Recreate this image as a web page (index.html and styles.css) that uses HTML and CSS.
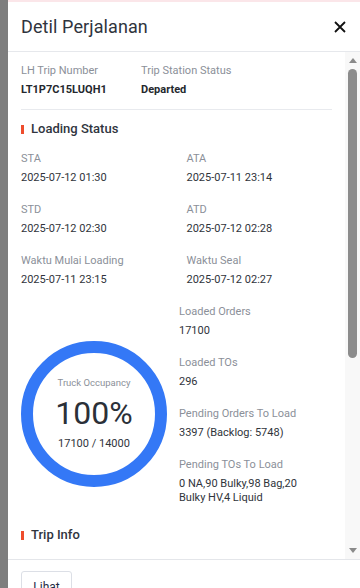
FILE: index.html
```html
<!DOCTYPE html>
<html lang="id">
<head>
<meta charset="utf-8">
<title>Detil Perjalanan</title>
<link rel="stylesheet" href="styles.css">
</head>
<body>
<div class="page">
  <div class="shade"></div>
  <aside class="drawer">
    <header class="drawer-header">
      <h1 class="drawer-title">Detil Perjalanan</h1>
      <button class="close-btn" aria-label="Tutup">
        <svg width="12" height="12" viewBox="0 0 12 12"><path d="M1 1L11 11M11 1L1 11" stroke="#111" stroke-width="1.8" fill="none"/></svg>
      </button>
    </header>
    <div class="drawer-body">
      <div class="scroll-content">
        <div class="trip-row">
          <div class="field">
            <div class="label">LH Trip Number</div>
            <div class="value bold">LT1P7C15LUQH1</div>
          </div>
          <div class="field">
            <div class="label">Trip Station Status</div>
            <div class="value bold">Departed</div>
          </div>
        </div>
        <div class="divider"></div>
        <h2 class="section-title"><span class="bar"></span>Loading Status</h2>
        <div class="grid">
          <div class="field item"><div class="label">STA</div><div class="value">2025-07-12 01:30</div></div>
          <div class="field item"><div class="label">ATA</div><div class="value">2025-07-11 23:14</div></div>
          <div class="field item"><div class="label">STD</div><div class="value">2025-07-12 02:30</div></div>
          <div class="field item"><div class="label">ATD</div><div class="value">2025-07-12 02:28</div></div>
          <div class="field item"><div class="label">Waktu Mulai Loading</div><div class="value">2025-07-11 23:15</div></div>
          <div class="field item"><div class="label">Waktu Seal</div><div class="value">2025-07-12 02:27</div></div>
        </div>
        <div class="occupancy">
          <div class="ring">
            <div class="ring-label">Truck Occupancy</div>
            <div class="ring-pct">100%</div>
            <div class="ring-sub">17100 / 14000</div>
          </div>
          <div class="occ-list">
            <div class="field item"><div class="label">Loaded Orders</div><div class="value">17100</div></div>
            <div class="field item"><div class="label">Loaded TOs</div><div class="value">296</div></div>
            <div class="field item"><div class="label">Pending Orders To Load</div><div class="value">3397 (Backlog: 5748)</div></div>
            <div class="field item"><div class="label">Pending TOs To Load</div><div class="value">0 NA,90 Bulky,98 Bag,20 Bulky HV,4 Liquid</div></div>
          </div>
        </div>
        <h2 class="section-title"><span class="bar"></span>Trip Info</h2>
      </div>
      <div class="scrollbar">
        <div class="arrow-up"></div>
        <div class="thumb"></div>
        <div class="spacer"></div>
        <div class="arrow-down"></div>
      </div>
    </div>
    <footer class="drawer-footer">
      <button class="btn">Lihat</button>
    </footer>
  </aside>
</div>
</body>
</html>
```
FILE: styles.css
```css
* { box-sizing: border-box; }
html, body { margin: 0; padding: 0; }
body {
  font-family: Roboto, "Liberation Sans", Arial, sans-serif;
  width: 360px;
  height: 588px;
  overflow: hidden;
  background: #808080;
}
.page {
  display: flex;
  height: 588px;
}
.shade {
  width: 8px;
  flex: none;
  background: #7e7e7e;
}
.drawer {
  flex: 1;
  display: flex;
  flex-direction: column;
  background: #fff;
  border-top: 2px solid #fbe6e9;
  height: 588px;
}
.drawer-header {
  height: 50px;
  flex: none;
  display: flex;
  align-items: center;
  justify-content: space-between;
  padding: 0 13px 0 13px;
  border-bottom: 1px solid #e6e8ec;
}
.drawer-title {
  margin: 0;
  font-size: 18px;
  font-weight: 400;
  color: #2f343d;
  letter-spacing: 0.1px;
}
.close-btn {
  border: 0;
  background: none;
  padding: 0;
  width: 12px;
  height: 12px;
  margin-right: 1px;
  display: flex;
}
.drawer-body {
  height: 507px;
  flex: none;
  display: flex;
}
.scroll-content {
  flex: 1;
  overflow: hidden;
  padding: 12px 13px 0 13px;
}
.trip-row {
  display: grid;
  grid-template-columns: 120px 1fr;
}
.label {
  font-size: 11px;
  line-height: 14px;
  color: #8b9099;
}
.value {
  font-size: 11px;
  line-height: 14px;
  margin-top: 5px;
  color: #30343b;
}
.value.bold {
  font-weight: 700;
  color: #24282e;
}
.divider {
  height: 1px;
  background: #e8eaee;
  margin: 12px 0 9px;
}
.section-title {
  margin: 0;
  display: flex;
  align-items: center;
  gap: 7px;
  font-size: 13px;
  line-height: 20px;
  font-weight: 500;
  color: #30353e;
}
.bar {
  width: 3px;
  height: 9px;
  background: #ee4d2d;
}
.grid {
  margin-top: 13px;
  display: grid;
  grid-template-columns: 1fr 1fr;
  column-gap: 20px;
}
.item {
  margin-bottom: 18px;
}
.occupancy {
  display: flex;
  gap: 12px;
  margin-bottom: 2px;
}
.ring {
  flex: none;
  width: 146px;
  height: 146px;
  margin-top: 36px;
  border: 12px solid #3478f6;
  border-radius: 50%;
  display: flex;
  flex-direction: column;
  align-items: center;
  justify-content: center;
}
.ring-label {
  font-size: 9.5px;
  line-height: 12px;
  color: #8b9099;
}
.ring-pct {
  font-size: 32px;
  line-height: 36px;
  margin-top: 6px;
  color: #2b3038;
}
.ring-sub {
  font-size: 11px;
  line-height: 14px;
  margin-top: 6px;
  color: #30343b;
}
.occ-list {
  width: 142px;
}
.scrollbar {
  width: 15px;
  flex: none;
  background: #f8f8f8;
  display: flex;
  flex-direction: column;
  align-items: center;
  padding: 6px 0 6px;
}
.arrow-up {
  width: 0;
  height: 0;
  border-left: 4.5px solid transparent;
  border-right: 4.5px solid transparent;
  border-bottom: 5px solid #8a8a8a;
}
.thumb {
  width: 9px;
  height: 289px;
  margin-top: 6px;
  background: #8c8c8c;
  border-radius: 5px;
}
.spacer { flex: 1; }
.arrow-down {
  width: 0;
  height: 0;
  border-left: 4.5px solid transparent;
  border-right: 4.5px solid transparent;
  border-top: 5px solid #8a8a8a;
}
.drawer-footer {
  flex: 1;
  border-top: 1px solid #e4e6ea;
  padding: 11px 13px;
}
.btn {
  font-family: Roboto, "Liberation Sans", Arial, sans-serif;
  font-size: 12px;
  color: #1e2a44;
  background: #fff;
  border: 1px solid #dcdfe6;
  border-radius: 3px;
  height: 32px;
  width: 51px;
  padding: 0;
}
```
